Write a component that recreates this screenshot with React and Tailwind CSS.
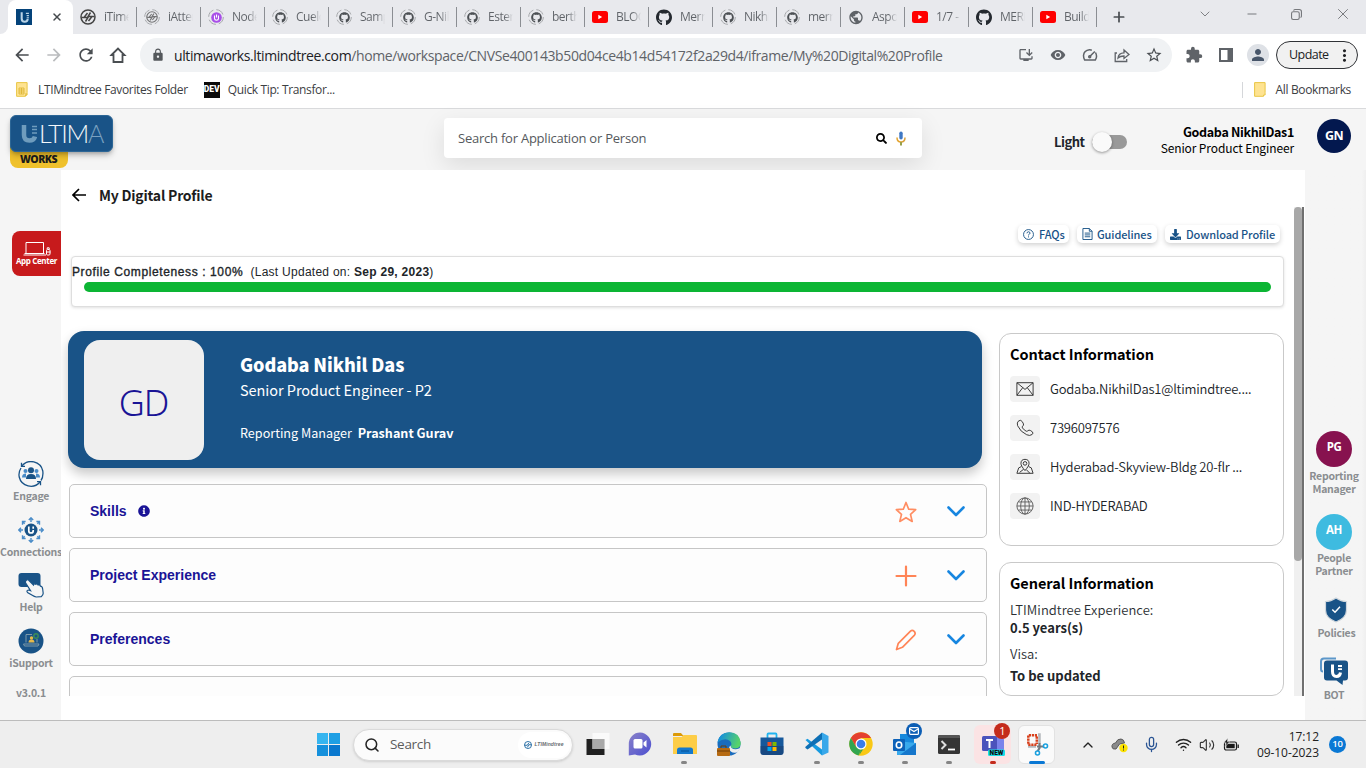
import React from "react";
import { FaGithub, FaInfoCircle, FaSearch, FaDownload } from "react-icons/fa";
import { MdInstallDesktop, MdRemoveRedEye, MdExtension, MdPerson, MdLock, MdPublic, MdMoreVert, MdStarBorder, MdRefresh, MdArrowBack, MdArrowForward } from "react-icons/md";
import { Wifi, Volume2, ChevronDown, ChevronUp, Mic, X, Plus, Minus, Search } from "lucide-react";

const UI = "font-['Open_Sans','Noto_Sans',sans-serif]";
const SRC = "font-['Noto_Sans_CJK_SC',sans-serif]";

/* ---------- Browser tabs ---------- */

const MarkIcon = ({ className }) => (
  <svg viewBox="0 0 16 16" className={className} fill="none" stroke="#444" strokeWidth="1.500">
    <circle cx="8" cy="8" r="7" />
    <path d="M1.500 8.500H7.500L10.500 3.500M14.500 7.500H8.500L5.500 12.500M7.500 4L4 8.500M8.500 12l3.500-4.500" />
  </svg>
);

const Ring = ({ children }) => (
  <span className="relative flex size-4 items-center justify-center">
    <svg viewBox="0 0 16 16" className="absolute size-4" fill="none" stroke="#a6a8ab" strokeWidth="1">
      <circle cx="8" cy="8" r="7.300" strokeDasharray="8.500 3" />
    </svg>
    {children}
  </span>
);

const favicons = {
  mark: <MarkIcon className="size-4" />,
  ringMark: <Ring><MarkIcon className="size-3 opacity-70" /></Ring>,
  node: (
    <Ring>
      <svg viewBox="0 0 11 11" className="size-[11px]"><circle cx="5.500" cy="5.500" r="5.300" fill="#a84fe8" /><path d="M3.500 3.500v3q0 1.700 2 1.700t2-1.700v-3M5.500 2.500v3" stroke="#fff" strokeWidth="1.100" fill="none" /></svg>
    </Ring>
  ),
  ringGit: <Ring><FaGithub className="size-[11px] text-[#4c5054]" /></Ring>,
  git: <FaGithub className="size-[17px] text-[#24292f]" />,
  yt: (
    <svg viewBox="0 0 16 12" className="w-4"><rect width="16" height="12" rx="2.500" fill="#f00" /><path d="M6.300 3.800v4.400L10.200 6z" fill="#fff" /></svg>
  ),
  globe: <MdPublic className="size-[17px] text-[#5f6368]" />,
};

const tabs = [
  ["mark", "iTime"], ["ringMark", "iAtten"], ["node", "Node"], ["ringGit", "Cuelo"], ["ringGit", "Samp"],
  ["ringGit", "G-Nik"], ["ringGit", "Ester"], ["ringGit", "berth"], ["yt", "BLOG"], ["git", "Mern"],
  ["ringGit", "Nikhi"], ["ringGit", "mern"], ["globe", "Aspo"], ["yt", "1/7 -"], ["git", "MERN"], ["yt", "Build"],
];

const ULogo = ({ className, color = "#fff" }) => (
  <svg viewBox="0 0 16 16" className={className} fill="none" stroke={color} strokeWidth="2.200">
    <path d="M5 2.500v6.500q0 3.500 3.200 3.500t3.200-3.300" />
    <path d="M9.500 3.600h3.200M10.300 6h2.400M10.300 8.300h2.400" strokeWidth="1.200" />
  </svg>
);

function TabStrip() {
  return (
    <div className="flex h-[34px] items-end bg-[#e8e9ed]">
      <div className="flex h-[34px] w-2 items-end bg-white"><div className="h-full w-2 rounded-br-lg bg-[#e8e9ed]" /></div>
      <div className="flex h-[34px] w-[65px] items-center justify-between rounded-t-lg bg-white pl-2">
        <span className="flex size-4 items-center justify-center bg-[#04437a]"><ULogo className="size-[15px]" color="#b9d3e6" /></span>
        <X className="mr-2.5 size-3 text-[#45494d]" strokeWidth={3} />
      </div>
      {tabs.map(([icon, text], i) => (
        <div key={i} className="flex h-[34px] w-16 items-center pl-[7px]">
          <span className="flex w-4 shrink-0 justify-center">{favicons[icon]}</span>
          <span className={`${UI} ml-2 w-[25px] overflow-hidden bg-gradient-to-r from-[#5f6368] from-65% to-[#5f636800] bg-clip-text text-xs tracking-[-0.5px] whitespace-nowrap text-transparent`}>{text}</span>
          <span className="ml-[7px] h-5 w-px bg-[#8b8e93]" />
        </div>
      ))}
      <Plus className="mb-[9px] ml-[14px] size-4 text-[#4a4e52]" strokeWidth={2.6} />
      <div className="mb-[11px] ml-auto flex items-center text-[#76787c]">
        <ChevronDown className="mr-[32px] size-4" strokeWidth={1.400} />
        <Minus className="mr-[32px] size-3.5" strokeWidth={1.700} />
        <svg viewBox="0 0 10 10" className="mr-[32px] size-[11px]" fill="none" stroke="currentColor"><rect x=".5" y="2.500" width="7" height="7" rx="1.500" /><path d="M2.500 1.500q0-1 1-1h4q2 0 2 2v4q0 1-1 1" /></svg>
        <X className="mr-[14px] size-[18px]" strokeWidth={1.300} />
      </div>
    </div>
  );
}

function Toolbar() {
  return (
    <div className="flex h-[42px] items-center bg-white text-[#5f6368]">
      <MdArrowBack className="ml-3 size-5 text-[#4a4e52]" />
      <MdArrowForward className="ml-3 size-5 text-[#babcbe]" />
      <MdRefresh className="ml-3 size-5 text-[#4a4e52]" />
      <svg viewBox="0 0 20 20" className="ml-3 size-5" fill="none" stroke="#4a4e52" strokeWidth="1.800"><path d="M3.500 10L10 3.500l6.500 6.500H14.500v7h-9v-7z" /></svg>
      <div className="ml-3 flex h-[34px] w-[1032px] items-center rounded-full bg-[#f0f2f4]">
        <MdLock className="ml-[11px] size-[14px] text-[#54585c]" />
        <span className={`${UI} ml-[9px] text-[14px] tracking-[-0.39px] whitespace-nowrap`}>
          <span className="tracking-[-0.4px] text-[#202124]">ultimaworks.ltimindtree.com</span>/home/workspace/CNVSe400143b50d04ce4b14d54172f2a29d4/iframe/My%20Digital%20Profile
        </span>
        <MdInstallDesktop className="ml-auto size-4" />
        <MdRemoveRedEye className="ml-4 size-4" />
        <svg viewBox="0 0 16 16" className="ml-4 size-4" fill="none" stroke="currentColor" strokeWidth="1.500"><path d="M9.800 3.200Q8.500 2.700 7.500 2.800 2 3.500 1.500 8.500q0 2.500 1.200 4.500h10.600q2.400-3.500.2-7.500M7.500 9.800L12.800 4.500" /><circle cx="7.700" cy="9.700" r="1" /></svg>
        <svg viewBox="0 0 16 16" className="ml-4 size-4" fill="none" stroke="currentColor" strokeWidth="1.300"><path d="M3 6H1.200v8.500h11.500V12M4 11q.5-5 6-5.200V3l5 4.500-5 4V9q-4 0-6 2z" /></svg>
        <MdStarBorder className="mr-[9px] ml-[15px] size-[18px] text-[#4a4e52]" />
      </div>
      <MdExtension className="ml-[13px] size-[18px]" />
      <svg viewBox="0 0 14 14" className="ml-4 size-3.5"><rect x="1" y="1" width="12" height="12" fill="none" stroke="#5f6368" strokeWidth="2" /><rect x="8.500" y="1" width="5" height="12" fill="#5f6368" /></svg>
      <span className="ml-[14px] flex size-[22px] items-center justify-center rounded-full bg-[#dee1e6]"><MdPerson className="size-[18px] text-[#475569]" /></span>
      <div className={`${UI} ml-[7px] flex h-7 w-[82px] items-center rounded-full border border-[#303236] bg-[#f1f1f1] pl-3 text-[12.500px] tracking-[-0.55px] text-[#202124]`}>
        Update<MdMoreVert className="ml-[6px] size-[19px] shrink-0" />
      </div>
    </div>
  );
}

const FolderIcon = ({ grid }) => (
  <svg viewBox="0 0 12 15" className="h-[15px] w-3">
    <path d="M.6.600h10.500v9.800V13H9.500v1.300H.6z" fill="#fee391" stroke="#e9c645" />
    {grid && <path d="M3 6h5v6H3zM3 8h5M3 10h5M5.500 6v6M10 11v3" fill="none" stroke="#dbb22f" strokeWidth=".8" />}
  </svg>
);

function Bookmarks() {
  return (
    <div className={`${UI} flex h-[33px] items-center border-b border-[#d9dadc] bg-white pb-[5px] text-xs text-[#3c4043]`}>
      <span className="ml-4"><FolderIcon grid /></span>
      <span className="ml-2.5 tracking-[-0.36px]">LTIMindtree Favorites Folder</span>
      <span className="ml-[16px] flex h-4 w-4 items-center justify-center bg-[#0b0b0b] font-['Roboto',sans-serif] text-[8.500px] font-black text-white">DEV</span>
      <span className="ml-2 tracking-[-0.36px]">Quick Tip: Transfor...</span>
      <span className="ml-auto h-4 w-px bg-[#d5d7da]" />
      <span className="ml-[11px]"><FolderIcon /></span>
      <span className="mr-[15px] ml-2.5 tracking-[-0.35px]">All Bookmarks</span>
    </div>
  );
}

/* ---------- Application header ---------- */

function AppHeader() {
  return (
    <header className="flex h-[61px] shrink-0 bg-[#f5f5f5]">
      <div className="ml-[10px] w-[104px] pt-[6px]">
        <div className="relative z-10 flex h-[37px] w-[103px] items-center rounded-md border border-[#2c6696] bg-[#195387] pl-[10px] shadow-md shadow-black/25">
          <svg viewBox="0 0 16 18" className="h-[18px] w-4" fill="none" stroke="#6f9cbd" strokeWidth="4.500"><path d="M3 0v10q0 5.500 5.500 5.500 4.500 0 5.500-4" /><path d="M11 1.500h5M11 4.500h5M11 8h5" strokeWidth="1.500" /></svg>
          <span className="ml-0.5 font-['Lato',sans-serif] text-[25px] leading-none font-light tracking-[-1.2px] text-[#f4f8fb]">LTIM<span className="text-[#7aa1c0]">A</span></span>
        </div>
        <div className={`${UI} -mt-[6px] flex h-[22px] w-[58px] items-end justify-center rounded-b-lg bg-[#efc12c] pr-px pb-px text-[10.500px] font-extrabold tracking-[-0.5px] text-[#1c1c1c]`}>
          <span className="leading-[16px]">WORKS</span>
        </div>
      </div>
      <div className="mt-[9px] ml-[330px] flex h-10 w-[478px] items-center rounded bg-white pl-[14px] shadow-[0_8px_24px_rgba(0,0,0,0.10)]">
        <span className={`${UI} pt-0.5 text-[13px] tracking-[-0.23px] text-[#55595d]`}>Search for Application or Person</span>
        <FaSearch className="mr-[9px] ml-auto size-[11px] text-black" />
        <svg viewBox="0 0 10 15" className="mr-4 h-[15px] w-2.5" fill="none" strokeWidth="1.500"><rect x="3.300" y=".5" width="3.400" height="8" rx="1.700" fill="#3f78c4" /><path d="M1 6.500q0 4.500 4 4.500" stroke="#e3a32e" /><path d="M9 6.500q0 4.500-4 4.500" stroke="#d9a03a" /><path d="M5 11v3.500" stroke="#98a04a" strokeWidth="2" /></svg>
      </div>
      <div className="ml-[132px] flex h-[30px] pt-[22px]">
        <span className={`${SRC} w-[30px] text-[13px] leading-[21px] font-bold tracking-[-0.5px] text-[#1e252b]`}>Light</span>
        <span className="relative mt-1 ml-2 h-[14px] w-[35px] rounded-full bg-[#999]"><span className="absolute -top-[3px] left-0 size-5 rounded-full bg-[#fafafa] shadow-[0_1px_3px_rgba(0,0,0,0.4)]" /></span>
      </div>
      <div className={`${SRC} mr-[23px] ml-auto pt-[15px] text-right text-black`}>
        <div className="text-[12.500px] leading-[16px] font-bold tracking-[-0.33px]">Godaba NikhilDas1</div>
        <div className="text-[12px] leading-[15px] tracking-[-0.12px]">Senior Product Engineer</div>
      </div>
      <span className={`${UI} mt-[10px] mr-[15px] flex size-[34px] items-center justify-center rounded-full bg-[#03184f] text-[12.500px] font-bold tracking-[-0.5px] text-white`}>GN</span>
    </header>
  );
}

/* ---------- Side rails ---------- */

const EngageIcon = () => (
  <svg viewBox="0 0 26 26" className="size-[26px]" fill="none" stroke="#195387" strokeWidth="1.300">
    <path d="M3.800 5A12 12 0 0 1 24.800 10Q25.500 16 23 19.500M22 21A12 12 0 0 1 1.200 16Q.3 11 3 7" />
    <path d="M3.500 1.800V5.300H7M22.500 24.200v-3.500H19" />
    <g fill="#4a8cc8" stroke="none"><circle cx="7.500" cy="10" r="2" /><circle cx="18.500" cy="10" r="2" /><path d="M4 16.500q0-4 4-4v4zM22 16.500q0-4-4-4v4z" /></g>
    <g fill="#195387" stroke="none"><circle cx="13" cy="9.300" r="3" /><path d="M8 18q0-5 5-5t5 5z" /></g>
  </svg>
);

const ConnectionsIcon = () => (
  <svg viewBox="0 0 26 26" className="size-[26px]" fill="none" stroke="#4a8cc8" strokeWidth="1.400">
    {[0, 90, 180, 270].map((a) => <path key={a} d="M13 5V1M10.800 3L13 .8 15.200 3" transform={`rotate(${a} 13 13)`} />)}
    {[45, 135, 225, 315].map((a) => <path key={a} d="M13 4V1.500M10.800 3.200L13 1l2.200 2.200" transform={`rotate(${a} 13 13)`} />)}
    <circle cx="13" cy="13" r="6.500" fill="#195387" stroke="none" />
    <path d="M10.800 9.500v4.500q0 2 2.200 2t2.200-2v-1M15.200 9.500v2.300" stroke="#fff" strokeWidth="1.700" />
  </svg>
);

const HelpIcon = () => (
  <svg viewBox="0 0 26 26" className="size-[26px]">
    <rect x=".5" y="1" width="22" height="14" rx="3" fill="#195387" />
    <path d="M8 8.500q1.800-1.500 3 0l4.500 4.500q.5-2 2.300-.7 1.500-1 2.300.7 2-.5 2.300 1.200 2 0 2.300 3l.5 4q0 2-2 3.500l-5 .3q-2-.5-3.500-1.500L9.500 20.500q-1.500-2 1-2.500l2 .7L7.700 11q-.7-1.500.3-2.500z" fill="#f5f5f5" stroke="#195387" strokeWidth="1.200" />
  </svg>
);

const SupportIcon = () => (
  <svg viewBox="0 0 26 26" className="size-[26px]">
    <circle cx="13" cy="13" r="12.500" fill="#195387" />
    <path d="M14 6.500H8v8M19 11v3.500M5.500 16h15.500l-1 2H6.500z" fill="none" stroke="#7d9aaa" />
    <circle cx="13.500" cy="10" r="1.700" fill="#e6b94a" /><path d="M10.500 14.500q0-3 3-3t3 3z" fill="#e6b94a" />
    <circle cx="18" cy="8" r="2.200" fill="none" stroke="#3c8c58" strokeWidth="1.400" />
  </svg>
);

const AppCenterIcon = () => (
  <svg viewBox="0 0 28 15" className="h-[15px] w-7" fill="none" stroke="#fff" strokeWidth="1"><path d="M3 12.500V1.500h17.500v11M.5 14h22.500M1.500 12.500h20" /><rect x="23.500" y="8.500" width="3.500" height="5.500" rx="1" /><path d="M23 11h4.500M24.200 8V6.800h2V8" /></svg>
);

const railLabel = `${SRC} text-[10.500px] font-bold text-[#8a8d90] text-center tracking-[-0.25px]`;

function LeftRail() {
  const items = [["Engage", <EngageIcon />], ["Connections", <ConnectionsIcon />], ["Help", <HelpIcon />], ["iSupport", <SupportIcon />]];
  return (
    <nav className="flex w-[61px] shrink-0 flex-col items-center bg-[#f5f5f5] pl-px">
      <div className="mt-[61px] flex h-[45px] w-[49px] flex-col items-center self-end rounded-l-lg bg-[#c71a1c] pt-2.5 text-white">
        <AppCenterIcon />
        <span className={`${UI} text-[8px] leading-[10px] font-bold tracking-[-0.35px]`}>App Center</span>
      </div>
      <div className="mt-[185px] flex flex-col items-center">
        {items.map(([name, icon]) => (
          <div key={name} className="flex h-[55.700px] flex-col items-center">
            {icon}
            <span className={`${railLabel} leading-[17px]`}>{name}</span>
          </div>
        ))}
      </div>
      <span className={`${railLabel} leading-[17px]`}>v3.0.1</span>
    </nav>
  );
}

function RightRail() {
  return (
    <aside className="flex w-[61px] shrink-0 flex-col items-center bg-gradient-to-r from-[#f5f5f5] from-93% to-[#efefef]">
      <div className="flex flex-col items-center pt-[260.500px] pr-[3px]">
        <span className={`${UI} flex size-9 items-center justify-center rounded-full bg-[#87124f] pb-[3px] text-[11.500px] font-bold tracking-[-0.5px] text-white`}>PG</span>
        <span className={`${railLabel} mt-[2px] leading-[13px]`}>Reporting<br />Manager</span>
        <span className={`${UI} mt-[19px] flex size-9 items-center justify-center rounded-full bg-[#3ebbe0] pb-[3px] text-[11.500px] font-bold tracking-[-0.5px] text-white`}>AH</span>
        <span className={`${railLabel} mt-[1px] leading-[13px]`}>People<br />Partner</span>
      </div>
      <svg viewBox="0 0 24 26" className="mt-[20px] ml-px h-[26px] w-6"><path d="M12 1q5 3.500 10.500 3.500v8.500q0 8-10.500 12Q1.500 21 1.500 13V4.500Q7 4.500 12 1z" fill="#195387" stroke="#cfd6dc" strokeWidth="1.200" /><path d="M8.300 12.500l2.700 2.700 5-5.500" fill="none" stroke="#fff" strokeWidth="1.500" /></svg>
      <span className={`${railLabel} mt-[1px] ml-[2px] leading-[18px]`}>Policies</span>
      <svg viewBox="0 0 28 28" className="mt-[15px] mr-1 h-7 w-7"><path d="M3 14.500Q1 14.500 1 12V4.500Q1 1.500 4 1.500h12" fill="none" stroke="#5c97ca" strokeWidth="2" /><path d="M7 3.500h18q3 0 3 3v14q0 3-3 3h-2l-.5 4.500-6-4.500H7q-3 0-3-3v-14q0-3 3-3z" fill="#195387" /><path d="M12.500 7.500v7q0 5 4 5 3.500 0 4-4" fill="none" stroke="#fff" strokeWidth="3" /><path d="M18 9h4M18 12.200h4" stroke="#fff" strokeWidth="1.800" /></svg>
      <span className={`${railLabel} mt-[1px] mr-[3px] leading-[18px]`}>BOT</span>
    </aside>
  );
}

/* ---------- Profile ---------- */

const pill = `${SRC} flex h-[18px] items-center rounded-[5px] bg-white text-[11px] font-medium tracking-[-0.1px] whitespace-nowrap text-[#195387] shadow-[0_2px_5px_rgba(0,0,0,0.18)] pl-[5px]`;

const StarIcon = () => (
  <svg viewBox="0 0 22 22" className="size-[22px]" fill="none" stroke="#ff8d62" strokeWidth="1.700" strokeLinejoin="round"><path d="M11 1.500l2.700 6.700 7 .5-5.200 4.700 1.700 7L11 16.700l-6.200 3.700 1.700-7L1.300 8.700l7-.5z" /></svg>
);
const PlusIcon = () => (
  <svg viewBox="0 0 22 22" className="size-[22px]" fill="none" stroke="#ff8456" strokeWidth="2.200" strokeLinecap="round"><path d="M11 1.500v19M1.500 11h19" /></svg>
);
const PencilIcon = () => (
  <svg viewBox="0 0 22 22" className="size-[22px]" fill="none" stroke="#ff8456" strokeWidth="1.700" strokeLinejoin="round"><path d="M1.500 20.500l1.800-6.200L15.500 2.100q1.800-1.400 3.700.3 1.700 1.900.300 3.700L7.400 18.300z" /></svg>
);

function Section({ title, info, action }) {
  return (
    <div className="flex h-[54px] shrink-0 items-center rounded-[5px] border border-[#c6c6c6] bg-[#fdfdfd] pl-[20px]">
      <span className="font-['Liberation_Sans',Arial,sans-serif] text-[14px] leading-5 font-bold text-[#1a1496]">{title}</span>
      {info && <FaInfoCircle className="ml-[11px] size-[12px] text-[#1a1496]" />}
      {action && (
        <>
          <span className="mr-[30px] ml-auto pt-px">{action}</span>
          <svg viewBox="0 0 18 11" className="mr-[21px] h-[11px] w-[18px]" fill="none" stroke="#1786e0" strokeWidth="2.600" strokeLinecap="round" strokeLinejoin="round"><path d="M1.500 1.500L9 9l7.500-7.500" /></svg>
        </>
      )}
    </div>
  );
}

const contact = [
  ["Godaba.NikhilDas1@ltimindtree....", <path d="M1 3h18v14H1zM1 3l9 7.500L19 3M1 17l6.500-8.500M19 17l-6.500-8.500" />],
  ["7396097576", <path d="M3 2Q5.500.5 7 3l1.300 2.500q.5 1.500-1 2.500-.8.800-.1 1.900 1.800 2.500 4.200 3.700 1 .4 1.800-.6 1.200-1.100 2.700-.3l2.200 1.500q1.600 1.500-.2 3-2.500 2-6 .3Q5 14.500 1.800 7.500.5 4 3 2z" />],
  ["Hyderabad-Skyview-Bldg 20-flr ...", <><path d="M10 14Q5.500 8.800 5.500 6a4.500 4.500 0 0 1 9 0q0 2.800-4.500 8zM6 9.500L3 11 1 17h18l-2-6-3-1.500M4 16l4.500-3.500M11.500 13l4 4" /><circle cx="10" cy="6" r="2" /></>],
  ["IND-HYDERABAD", <g stroke="#666"><circle cx="10" cy="10" r="9" /><ellipse cx="10" cy="10" rx="4.800" ry="9" /><path d="M10 1v18M1 10h18M2.500 5.500h15M2.500 14.500h15" /></g>],
];

function Profile() {
  return (
    <main className="flex w-[1244px] shrink-0 flex-col bg-white">
      <div className="flex h-[37px] items-center pt-[13px] pl-[11px]">
        <svg viewBox="0 0 14 14" className="size-3.5" fill="none" stroke="#000" strokeWidth="1.700"><path d="M14 7H1M7 1L1 7l6 6" /></svg>
        <span className={`${SRC} ml-[13px] pb-px text-[14px] leading-5 font-bold tracking-[-0.22px] text-[#1d1d1d]`}>My Digital Profile</span>
      </div>
      <div className="flex h-[489px]">
        <div className="flex w-[1233px] flex-col overflow-hidden">
          <div className="mt-[18px] mr-[14px] flex shrink-0 justify-end gap-2">
            <span className={`${pill} w-[51px]`}>
              <svg viewBox="0 0 12 12" className="mr-[5px] size-[11px] shrink-0" fill="none" stroke="currentColor"><circle cx="6" cy="6" r="5.400" /><path d="M4.300 4.700Q4.500 3 6 3t1.700 1.500Q7.700 5.500 6 6.300V7M6 8v1.200" /></svg>FAQs
            </span>
            <span className={`${pill} w-[80px]`}>
              <svg viewBox="0 0 12 13" className="mr-1 h-[12px] w-[11px] shrink-0" fill="none" stroke="currentColor"><path d="M1 .5h7l3 3v9H1zM8 .5v3h3M3 5.500h6M3 7.500h6M3 9.500h6" /></svg>Guidelines
            </span>
            <span className={`${pill} w-[115px]`}><FaDownload className="mr-[5px] size-[11px] shrink-0" />Download Profile</span>
          </div>
          <div className="mt-[13px] ml-[10px] h-[51px] w-[1213px] shrink-0 rounded border border-[#dedede] bg-white pt-[7px] shadow-[0_1px_3px_rgba(0,0,0,0.12)]">
            <p className="font-['Liberation_Sans',Arial,sans-serif] text-[12px] leading-4 tracking-[0.27px] whitespace-pre text-[#212529]"><span className="tracking-[0.61px] [-webkit-text-stroke:0.35px_#212529]">Profile Completeness : 100%</span>  (Last Updated on: <b>Sep 29, 2023</b>)</p>
            <div className="mt-[2px] ml-3 h-[10px] w-[1187px] rounded-full bg-[#0cb534]" />
          </div>
          <div className="mt-6 flex shrink-0">
            <div className="ml-[7px] flex w-[919px] flex-col">
              <section className={`${SRC} flex h-[137px] w-[914px] rounded-2xl bg-[#195387] pt-[9px] pl-4 text-white shadow-[0_6px_12px_rgba(0,0,0,0.22)]`}>
                <div className="flex size-[120px] items-center justify-center rounded-2xl bg-[#efefef] pt-1.5 pr-px font-['Noto_Sans','Open_Sans',sans-serif] text-[36px] font-[350] tracking-[-1px] text-[#1a1496]">GD</div>
                <div className="ml-9 pt-[12px]">
                  <h1 className="text-[18px] leading-6 font-black tracking-[-0.1px]">Godaba Nikhil Das</h1>
                  <p className="mt-1 text-[14.500px] leading-5 tracking-[-0.05px]">Senior Product Engineer - P2</p>
                  <p className="mt-[23px] text-[12.600px] leading-5">Reporting Manager <b className="ml-[3px]">Prashant Gurav</b></p>
                </div>
              </section>
              <div className="mt-4 ml-px flex h-[212px] flex-col gap-[10px]">
                <Section title="Skills" info action={<StarIcon />} />
                <Section title="Project Experience" action={<PlusIcon />} />
                <Section title="Preferences" action={<PencilIcon />} />
                <Section />
              </div>
            </div>
            <div className={`${SRC} mt-[2px] ml-3 flex w-[285px] flex-col`}>
              <section className="h-[213px] shrink-0 rounded-xl border border-[#c9c9c9] pt-[8px] pl-[10px]">
                <h2 className="text-[14.500px] leading-6 font-bold tracking-[-0.05px] text-black">Contact Information</h2>
                <ul className="mt-[10px] flex flex-col gap-[13px]">
                  {contact.map(([text, icon]) => (
                    <li key={text} className="flex h-[26px] items-center">
                      <span className="flex h-[26px] w-[30px] items-center justify-center rounded bg-[#f2f2f2]"><svg viewBox="0 0 20 20" className="size-[18px]" fill="none" stroke="#3a3a3a" strokeWidth="1.100">{icon}</svg></span>
                      <span className="ml-[10px] text-[13px] font-[350] tracking-[-0.2px] text-[#202428]">{text}</span>
                    </li>
                  ))}
                </ul>
              </section>
              <section className="mt-4 h-[134px] shrink-0 rounded-xl border border-[#c9c9c9] pt-[8px] pl-[10px] text-[13px] leading-[18px] font-[350] text-[#2b2f33]">
                <h2 className="text-[14.500px] leading-6 font-bold tracking-[-0.05px] text-black">General Information</h2>
                <p className="mt-[6px] tracking-[0.05px]">LTIMindtree Experience:</p>
                <p className="font-bold text-[#212529]">0.5 years(s)</p>
                <p className="mt-[8px]">Visa:</p>
                <p className="mt-[4px] font-bold text-[#212529]">To be updated</p>
              </section>
            </div>
          </div>
        </div>
        <div className="w-[10px] border-r-2 border-[#707070] bg-[#f0f0f0]"><div className="h-[354px] rounded-sm bg-[#a8a8a8]" /></div>
      </div>
    </main>
  );
}

/* ---------- Taskbar ---------- */

const Store = () => (
  <svg viewBox="0 0 24 24" className="size-6"><path d="M7.500 6V2.500q0-1 1-1h7q1 0 1 1V6" fill="none" stroke="#20b4f0" strokeWidth="1.800" /><path d="M.5 5.500h23V20q0 3-3 3h-17q-3 0-3-3z" fill="#16589b" /><path d="M.5 14h23v6q0 3-3 3h-17q-3 0-3-3z" fill="#1b3f72" opacity=".6" /><path fill="#f25022" d="M7.500 10h4v4h-4z" /><path fill="#7fba00" d="M12.500 10h4v4h-4z" /><path fill="#00a4ef" d="M7.500 15h4v4h-4z" /><path fill="#ffb900" d="M12.500 15h4v4h-4z" /></svg>
);

const apps = [
  { icon: <svg viewBox="0 0 24 24" className="ml-[3px] size-6"><rect x=".5" y="7" width="18" height="16" fill="#202020" /><path d="M6.500 1h17v16h-17z" fill="#fbfbfb" opacity=".9" /><path d="M6.500 7h12v10h-12z" fill="#a9a9a9" /></svg> },
  { icon: <svg viewBox="0 0 24 24" className="size-6"><defs><linearGradient id="chat" x1="0" x2="1" y2="1"><stop stopColor="#8a82c9" /><stop offset="1" stopColor="#4c4fd0" /></linearGradient></defs><path d="M12 .5a11.500 11.500 0 1 1-5 22L.8 23.500V12A11.300 11.300 0 0 1 12 .5z" fill="url(#chat)" /><rect x="5.500" y="7" width="9" height="9.500" rx="1.500" fill="#fff" /><path d="M15.500 10.500l3-2.500v7.500l-3-2.500z" fill="#fff" /></svg> },
  { dot: true, icon: <svg viewBox="0 0 24 24" className="ml-px size-6"><path d="M0 2q0-1 1-1h7l2.500 3H0z" fill="#dc9a08" /><path d="M0 5h8.500L10.500 3H23q1 0 1 1v18H0z" fill="#fdcd47" /><path d="M4 22v-4q0-2.500 2.500-2.500h11Q20 15.500 20 18v4z" fill="#1579cd" /><path d="M8 19h8" stroke="#0b5fa8" strokeWidth="1.500" /></svg> },
  {
    icon: (
      <svg viewBox="0 0 24 24" className="ml-px size-6">
        <defs><linearGradient id="edge" x1="0" x2="1" y2=".3"><stop offset=".2" stopColor="#1993d5" /><stop offset="1" stopColor="#57d36a" /></linearGradient></defs>
        <circle cx="12" cy="12" r="11.500" fill="#1a6cbd" />
        <path d="M.5 10.500Q2.500.3 12.500.3T23.800 11q0 5-5.500 5.500-4.500 0-4.500-2.500 1.500-2.500-.8-5Q8 5 .5 10.500z" fill="url(#edge)" />
        <path d="M13.500 13.500q.5 4 5.500 3.700 2.500-.3 4-1.200-1 3-3 4.500-7 1-8-4 0-2 1.500-3z" fill="#eee" />
        <rect y="16" width="13" height="8" rx="1" fill="#b66a12" /><path d="M4 16v-2h5v2M0 19h13" fill="none" stroke="#6d3d08" />
      </svg>
    ),
  },
  { icon: <Store /> },
  { dot: true, icon: <svg viewBox="0 0 24 24" className="size-6"><path d="M.5 8l2-1.300L17 17.500v6z" fill="#169ae0" /><path d="M17 .5v7L2.500 17.500.5 16q-.5-.7 0-1.300z" fill="#0d6fb5" /><path d="M17 .5L23.500 4v16.500L17 23.500z" fill="#38a8ea" /></svg> },
  { dot: true, icon: <svg viewBox="0 0 24 24" className="size-6"><circle cx="12" cy="12" r="11.700" fill="#f9c815" /><path d="M1.900 6A11.700 11.700 0 0 1 22.100 6H12L7 15z" fill="#e4402f" /><path d="M1.900 6l5.200 9 4.900 3-2.500 5.500A11.700 11.700 0 0 1 1.900 6z" fill="#31a550" /><path d="M12 17.500l-2 6 6-9z" fill="#31a550" /><circle cx="12" cy="12" r="5.500" fill="#fff" /><circle cx="12" cy="12" r="4.300" fill="#3b7de9" /></svg> },
  { dot: true, badge: "mail", icon: <svg viewBox="0 0 24 24" className="size-6"><path d="M7 2h14v10H7z" fill="#1789dd" /><path d="M4 9l19 2v12H4z" fill="#38a9ec" /><path d="M23 11v12H7z" fill="#1577cc" /><rect y="7" width="12" height="12" rx="1" fill="#0c62b9" /><ellipse cx="6" cy="13" rx="2.700" ry="3" fill="none" stroke="#fff" strokeWidth="1.600" /></svg> },
  { dot: true, icon: <svg viewBox="0 0 24 24" className="size-6"><rect x="1" y="3" width="22" height="19" rx="1.500" fill="#353535" /><path d="M1 6V4.500Q1 3 2.500 3h19Q23 3 23 4.500V6z" fill="#555" /><path d="M4.500 9l4 4-4 4" fill="none" stroke="#ddd" strokeWidth="2" /><path d="M11 17.500h7" stroke="#fff" strokeWidth="1.800" /></svg> },
  { red: true, badge: "1", icon: <svg viewBox="0 0 24 24" className="size-6"><rect x="11" y="5" width="12" height="15" rx="3" fill="#7b83eb" /><rect x="1" y="4" width="15" height="15" rx="1.500" fill="#4b53bc" /><path d="M5 8h7M8.500 8v8" stroke="#fff" strokeWidth="2" /><rect x="7" y="17.500" width="17" height="6.500" rx="1.500" fill="#19dfe6" /><text x="15.500" y="23.200" fontSize="6.500" fontWeight="900" fontFamily="Roboto" textAnchor="middle" fill="#111">NEW</text></svg> },
  { active: true, icon: <svg viewBox="0 0 24 24" className="size-6"><path d="M13 2.500h1.500v9M3 14.500h8" fill="none" stroke="#b5b9bd" strokeWidth="2.500" /><path d="M12 3.200H3.300v9.500M3.300 12.800H12M11.800 4.500V12" fill="none" stroke="#d8401c" strokeWidth="2.500" strokeDasharray="2.200 .8" /><path d="M14.500 11v5L12.500 19.500M12 14.500h7" fill="none" stroke="#72797f" strokeWidth="2.200" /><circle cx="20.500" cy="14" r="2" fill="#fff" stroke="#1aa0df" strokeWidth="1.600" /><circle cx="12.500" cy="21" r="2" fill="#fff" stroke="#1aa0df" strokeWidth="1.600" /></svg> },
];

function Taskbar() {
  return (
    <footer className={`${UI} flex h-12 items-center border-t border-[#bcbcbc] bg-[#eeeeee]`}>
      <div className="ml-[317px] grid size-[23px] grid-cols-2 gap-px">
        <span className="bg-[#36b5ef]" /><span className="bg-[#1e9fe4]" /><span className="bg-[#1590dc]" /><span className="bg-[#0a78ce]" />
      </div>
      <div className="ml-[13px] flex h-8 w-[220px] items-center rounded-full border border-[#dadada] bg-[#fbfbfb] pl-[10px] shadow-sm">
        <Search className="size-4 text-[#242424]" strokeWidth={2.3} />
        <span className="ml-2.5 text-[13.500px] tracking-[-0.3px] text-[#5c5c5c]">Search</span>
        <span className="mr-[2px] ml-auto flex h-[26px] w-[52px] items-center justify-center gap-0.5 rounded-full bg-white">
          <svg viewBox="0 0 16 16" className="size-[8px]" fill="none" stroke="#17639e" strokeWidth="1.800"><circle cx="8" cy="8" r="7" /><path d="M1.500 8.500h5L9.500 4M14.500 7.500h-5L7 12.500" /></svg>
          <span className="font-['Liberation_Sans',sans-serif] text-[5px] font-bold tracking-[0.1px] text-[#6a6e72] italic">LTIMindtree</span>
        </span>
      </div>
      <div className="ml-px flex h-full">
        {apps.map((a, i) => (
          <div key={i} className="flex w-[44.100px] justify-center pt-1">
            <div className={`relative flex h-[39px] w-[37px] justify-center rounded-md ${a.active ? "border border-[#e2e2e2] bg-[#fafafa] pt-[6px]" : a.red ? "bg-[#fbe3e4] pt-[7px]" : "pt-[7px]"}`}>
              {a.icon}
              {a.badge === "1" && <span className="absolute -top-[2px] right-[1px] flex size-[16px] items-center justify-center rounded-full bg-[#c42b1c] text-[11px] text-white">1</span>}
              {a.badge === "mail" && <span className="absolute -top-[2px] right-[1px] flex size-[16px] items-center justify-center rounded-full bg-[#0c5eb5]"><svg viewBox="0 0 10 8" className="w-[10px]" fill="none" stroke="#fff" strokeWidth="1.200"><rect x=".6" y=".6" width="8.800" height="6.800" rx="1" /><path d="M1 2l4 2.500L9 2" /></svg></span>}
              {a.dot && <span className="absolute bottom-0 h-[3px] w-[6px] rounded-full bg-[#858585]" />}
              {a.red && <span className="absolute bottom-0 h-[3px] w-[6px] rounded-full bg-[#c42b1c]" />}
              {a.active && <span className="absolute -bottom-px h-[3px] w-4 rounded-full bg-[#0a78d4]" />}
            </div>
          </div>
        ))}
      </div>
      <ChevronUp className="ml-[21px] size-4 text-[#222]" strokeWidth={2} />
      <svg viewBox="0 0 18 16" className="ml-[15px] h-4 w-[18px]"><path d="M1 10q-.5-3.500 3.500-4Q6.500 1.500 10 2q3 .3 3.500 4l-5 1-3.500 5H4Q1.500 12.500 1 10z" fill="#8a8a8a" stroke="#5a5a5a" /><circle cx="12.500" cy="11" r="4.200" fill="#fde300" /><path d="M12.500 8.500v3M12.500 12.500v1" stroke="#222" /></svg>
      <Mic className="ml-[14px] size-[17px] text-[#2a5594]" strokeWidth={1.800} />
      <Wifi className="ml-[15px] size-[17px] text-[#222]" strokeWidth={2} />
      <Volume2 className="ml-[7px] size-4 text-[#333]" strokeWidth={1.700} />
      <svg viewBox="0 0 16 14" className="ml-[8px] h-[14px] w-4"><rect x="1.500" y="4" width="12" height="8" rx="1.800" fill="none" stroke="#1a1a1a" strokeWidth="1.200" /><rect x="3.300" y="5.800" width="8.400" height="4.400" fill="#1a1a1a" /><path d="M15.200 6.500v3.500" stroke="#1a1a1a" strokeWidth="1.300" /><path d="M4.800 0L.8 4.800h2.400L2 8.500 6.800 3.800H4.500z" fill="#1a1a1a" stroke="#eee" strokeWidth=".6" /></svg>
      <div className="ml-auto text-right text-[12px] leading-4 tracking-[-0.05px] text-[#222]"><div>17:12</div><div>09-10-2023</div></div>
      <span className="mr-[20px] ml-[10px] flex size-[17px] items-center justify-center rounded-full bg-[#0a78d4] text-[9.500px] font-semibold tracking-[-0.3px] text-white">10</span>
    </footer>
  );
}

export default function App() {
  return (
    <div className="flex h-[768px] w-[1366px] flex-col overflow-hidden bg-white">
      <TabStrip />
      <Toolbar />
      <Bookmarks />
      <div className="flex h-[611px] shrink-0 flex-col">
        <AppHeader />
        <div className="flex h-[550px]">
          <LeftRail />
          <Profile />
          <RightRail />
        </div>
      </div>
      <Taskbar />
    </div>
  );
}
